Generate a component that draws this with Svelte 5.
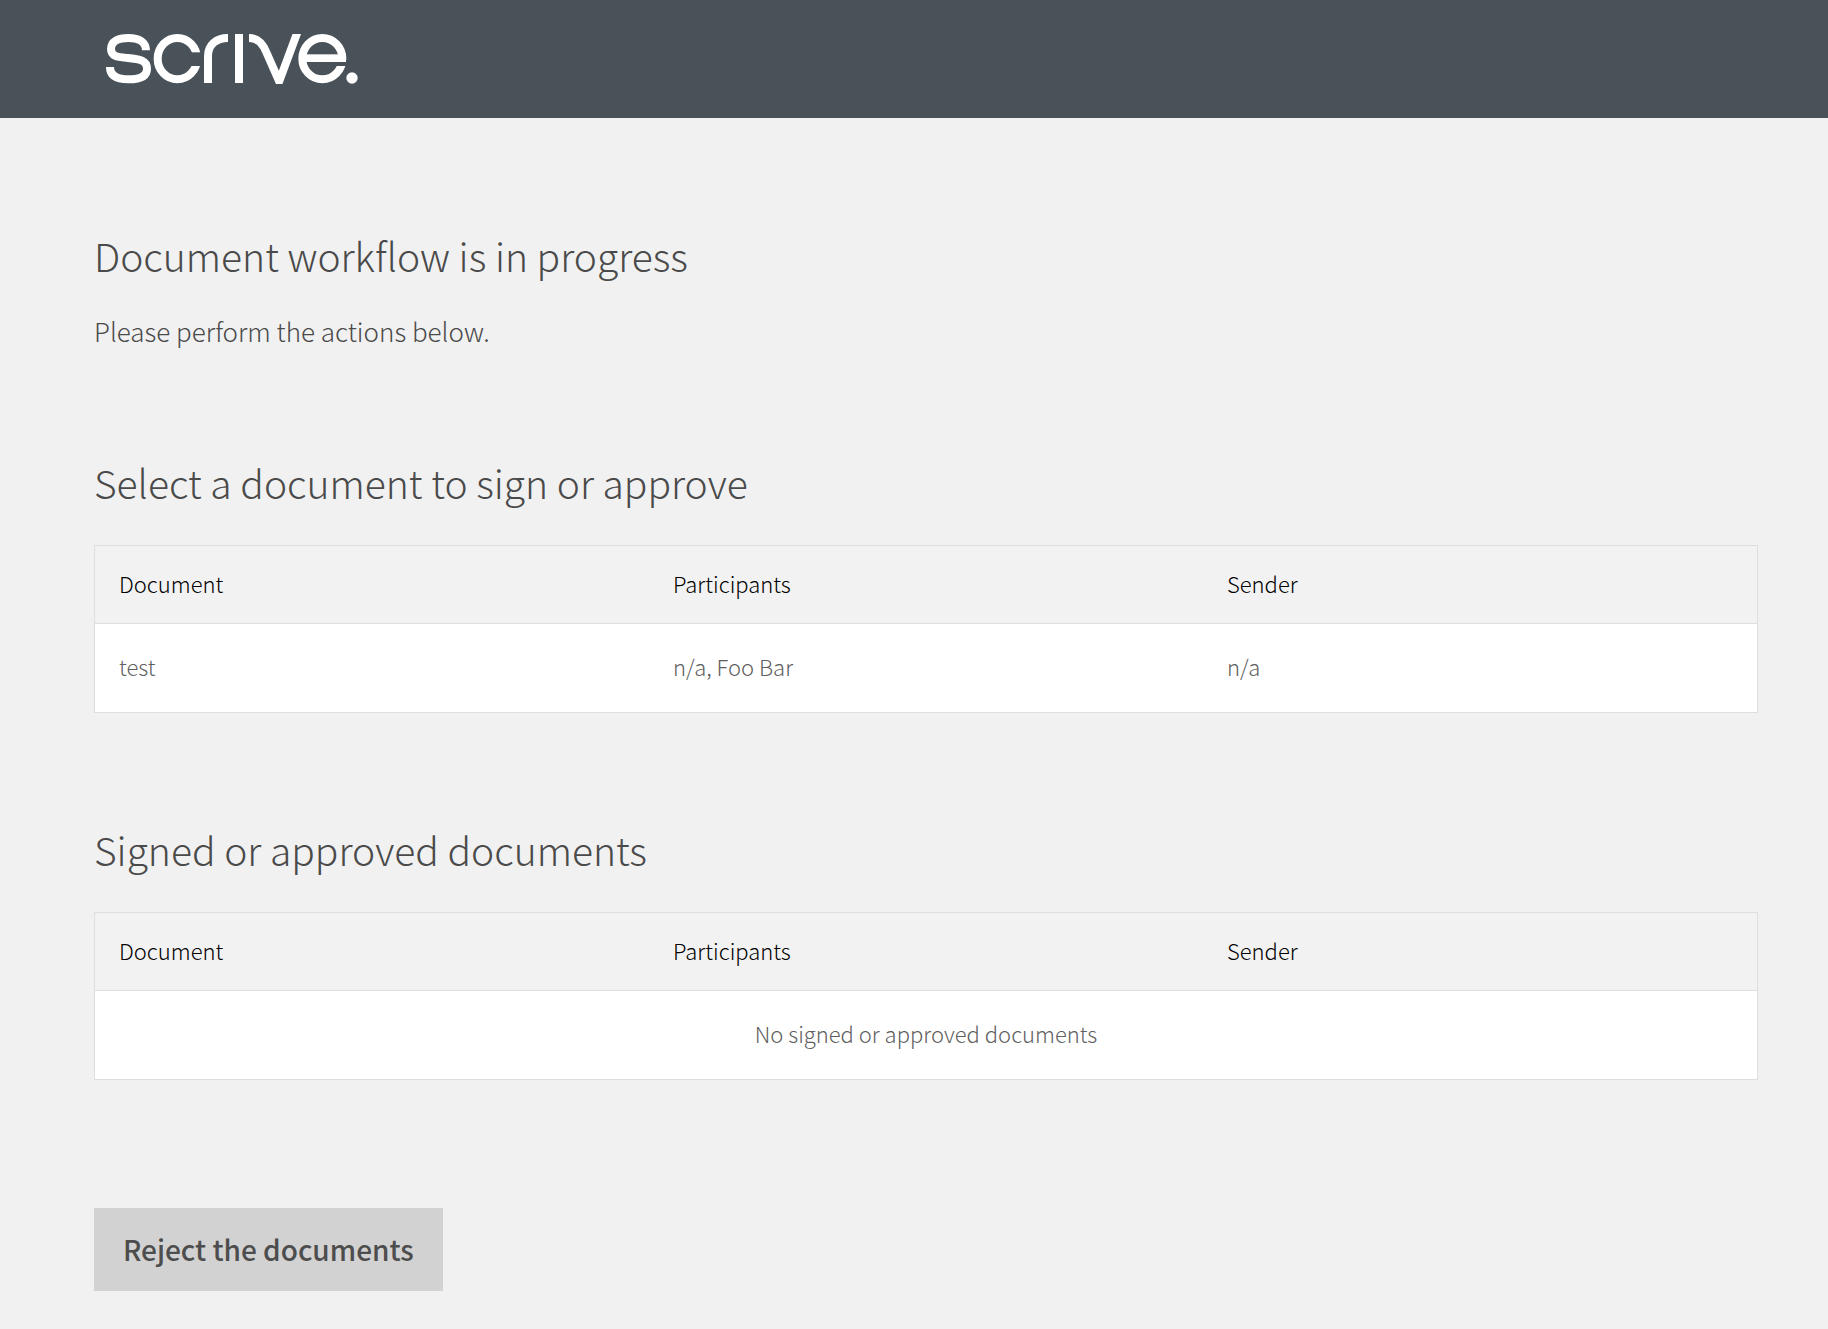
<script lang="ts">
	type DocumentRow = {
		title: string;
		participants: string[];
		sender: string;
	};

	const columns = ['Document', 'Participants', 'Sender'];

	let pending = $state<DocumentRow[]>([
		{ title: 'test', participants: ['n/a', 'Foo Bar'], sender: 'n/a' }
	]);
	let completed = $state<DocumentRow[]>([]);
</script>

{#snippet documentTable(rows: DocumentRow[], labelledBy: string, emptyText: string)}
	<table aria-labelledby={labelledBy}>
		<thead>
			<tr>
				{#each columns as column (column)}
					<th scope="col">{column}</th>
				{/each}
			</tr>
		</thead>
		<tbody>
			{#each rows as row}
				<tr>
					<td>{row.title}</td>
					<td>{row.participants.join(', ')}</td>
					<td>{row.sender}</td>
				</tr>
			{:else}
				<tr>
					<td class="empty" colspan={columns.length}>{emptyText}</td>
				</tr>
			{/each}
		</tbody>
	</table>
{/snippet}

<header class="site-header">
	<svg class="logo" viewBox="48 42 756 150" role="img" aria-label="Scrive">
		<g class="strokes">
			<path d="M168 91C168 66 147 54 115 54C84 54 63 65 63 87C63 110 84 111 113 114C149 117 171 121 171 146C171 168 150 178 115 178C80 178 60 167 60 141" />
			<ellipse cx="262" cy="116" rx="59" ry="62" />
			<path d="M354 189V108C354 75 378 54 414 54" />
			<path d="M447 42V189" />
			<path d="M477 54C506 54 519 73 529 97L567.500 184L624 32" />
			<ellipse cx="697" cy="116" rx="60" ry="62" />
		</g>
		<rect class="gap" x="295" y="97" width="45" height="41" />
		<rect class="gap" x="725" y="120" width="50" height="18" />
		<rect class="fill" x="640" y="103" width="128" height="23" />
		<circle class="fill" cx="786" cy="174" r="17" />
	</svg>
</header>

<main>
	<section>
		<h1>Document workflow is in progress</h1>
		<p class="intro">Please perform the actions below.</p>
	</section>

	<section>
		<h2 id="pending-heading">Select a document to sign or approve</h2>
		{@render documentTable(pending, 'pending-heading', 'No documents to sign or approve')}
	</section>

	<section>
		<h2 id="completed-heading">Signed or approved documents</h2>
		{@render documentTable(completed, 'completed-heading', 'No signed or approved documents')}
	</section>

	<button class="reject" type="button">Reject the documents</button>
</main>

<style>
	:global(body) {
		margin: 0;
		background: #f1f1f1;
		color: #4a4a4a;
		font-family: 'Noto Sans CJK SC', 'Noto Sans', sans-serif;
		font-weight: 300;
	}

	.site-header {
		padding: 34px 106px;
		background: #4a5259;
	}

	.logo {
		display: block;
		width: 252px;
		height: 50px;
	}

	.strokes {
		fill: none;
		stroke: #fff;
		stroke-width: 24;
		stroke-miterlimit: 10;
	}

	.gap {
		fill: #4a5259;
	}

	.fill {
		fill: #fff;
	}

	main {
		padding: 113px 70px 38px 94px;
	}

	section {
		margin-bottom: 112px;
	}

	h1,
	h2 {
		margin: 0;
		font-size: 39px;
		font-weight: inherit;
		line-height: 48px;
	}

	h2 {
		margin-bottom: 39px;
	}

	.intro {
		margin: 37px 0 0;
		font-size: 26px;
		line-height: 30px;
	}

	table {
		width: 100%;
		table-layout: fixed;
		border: 1px solid #dedede;
		border-spacing: 0;
		font-size: 22px;
		line-height: 32px;
	}

	th,
	td {
		text-align: left;
	}

	th {
		padding: 21px 24px 24px;
		border-bottom: 1px solid #dedede;
		background: #f2f2f2;
		color: #000;
		font-weight: inherit;
	}

	td {
		padding: 26px 24px 30px;
		background: #fff;
		color: #606060;
	}

	.empty {
		text-align: center;
	}

	.reject {
		display: block;
		margin-top: 128px;
		padding: 20px 29px;
		border: none;
		background: #d2d2d2;
		color: #4d4d4d;
		font-family: inherit;
		font-size: 28px;
		font-weight: 500;
		line-height: 43px;
		cursor: pointer;
	}
</style>
